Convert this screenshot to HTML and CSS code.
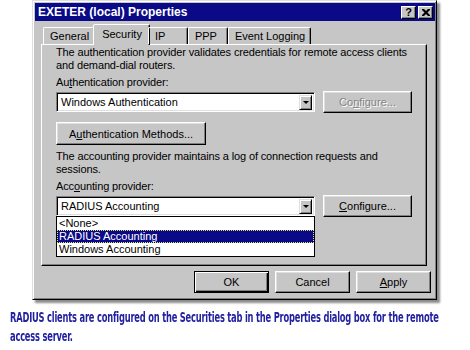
FILE: index.html
```html
<!DOCTYPE html>
<html lang="en">
<head>
    <meta charset="UTF-8">
    <title>EXETER (local) Properties</title>
    <link rel="stylesheet" href="styles.css">
</head>
<body>
    <div class="dialog">
        <div class="titlebar">
            <span class="title">EXETER (local) Properties</span>
            <div class="title-buttons">
                <span class="tbtn help">?</span>
                <span class="tbtn">
                    <svg width="8" height="7" viewBox="0 0 8 7"><path d="M0 0h2l2 2 2-2h2v1l-2.5 2.5L8 6v1H6L4 5 2 7H0V6l2.5-2.5L0 1z" fill="#000"/></svg>
                </span>
            </div>
        </div>

        <div class="tabs">
            <span class="tab">General</span>
            <span class="tab active">Security</span>
            <span class="tab">IP</span>
            <span class="tab">PPP</span>
            <span class="tab">Event Logging</span>
        </div>

        <div class="panel">
            <p class="text">The authentication provider validates credentials for remote access clients and demand-dial routers.</p>
            <div class="label">Au<u>t</u>hentication provider:</div>
            <div class="row">
                <div class="combo">
                    <span class="combo-value">Windows Authentication</span>
                    <span class="combo-arrow"><i></i></span>
                </div>
                <button class="btn config" disabled>Co<u>n</u>figure...</button>
            </div>
            <button class="btn methods">A<u>u</u>thentication Methods...</button>

            <p class="text second">The accounting provider maintains a log of connection requests and sessions.</p>
            <div class="label">Acc<u>o</u>unting provider:</div>
            <div class="row acct">
                <div class="combo-wrap">
                    <div class="combo">
                        <span class="combo-value">RADIUS Accounting</span>
                        <span class="combo-arrow"><i></i></span>
                    </div>
                    <ul class="dropdown">
                        <li>&lt;None&gt;</li>
                        <li class="selected">RADIUS Accounting</li>
                        <li>Windows Accounting</li>
                    </ul>
                </div>
                <button class="btn config"><u>C</u>onfigure...</button>
            </div>
        </div>

        <div class="footer">
            <button class="btn default">OK</button>
            <button class="btn">Cancel</button>
            <button class="btn"><u>A</u>pply</button>
        </div>
    </div>

    <p class="caption">RADIUS clients are configured on the Securities tab in the Properties dialog box for the remote<br>access server.</p>
</body>
</html>
```

FILE: styles.css
```css
body {
    margin: 0;
    background: #fff;
    font-family: "Liberation Sans", Arial, sans-serif;
    font-size: 11px;
}

.dialog {
    box-sizing: border-box;
    width: 405px;
    height: 300px;
    margin-left: 32px;
    padding: 1px;
    background: #c6c6c6;
    border: 1px solid;
    border-color: #dfdfdf #000 #000 #dfdfdf;
    box-shadow: inset 1px 1px #fff, inset -1px -1px #808080, 3px 3px 2px rgba(0, 0, 0, 0.45);
}

.titlebar {
    display: flex;
    align-items: center;
    justify-content: space-between;
    height: 18px;
    margin: 1px 0 0 1px;
    padding: 0 2px 0 3px;
    background: #0a0a88;
}

.title {
    color: #fff;
    font-weight: bold;
    font-size: 12px;
}

.title-buttons {
    display: flex;
    gap: 2px;
}

.tbtn {
    box-sizing: border-box;
    display: flex;
    align-items: center;
    justify-content: center;
    width: 15px;
    height: 13px;
    background: #c6c6c6;
    border: 1px solid;
    border-color: #fff #000 #000 #fff;
    box-shadow: inset -1px -1px #808080;
    font-weight: bold;
    font-size: 11px;
    line-height: 1;
}

/* tabs */
.tabs {
    display: flex;
    align-items: flex-end;
    height: 20px;
    margin: 3px 0 0 8px;
    padding-left: 1px;
    position: relative;
    z-index: 1;
}

.tab {
    box-sizing: border-box;
    min-width: 40px;
    height: 17px;
    padding: 2px 5px 0 6px;
    border: 1px solid;
    border-bottom: none;
    border-color: #fff #000 transparent #fff;
    border-radius: 2px 2px 0 0;
    box-shadow: inset -1px 0 #808080;
    line-height: 13px;
    white-space: nowrap;
}

.tab.active {
    height: 21px;
    margin: 0 -2px -1px;
    padding: 3px 7px 0 8px;
    background: #c6c6c6;
}

/* panel */
.panel {
    box-sizing: border-box;
    width: 386px;
    height: 222px;
    margin-left: 7px;
    padding: 1px 14px 0;
    border: 1px solid;
    border-color: #fff #000 #000 #fff;
    box-shadow: inset -1px -1px #808080;
}

.text {
    margin: 0;
    width: 358px;
    line-height: 13px;
    letter-spacing: -0.13px;
}

.text.second {
    margin-top: 5px;
}

.label {
    margin-top: 4px;
    line-height: 13px;
    letter-spacing: -0.13px;
}

.row {
    display: flex;
    align-items: center;
    gap: 8px;
    margin-top: 2px;
}

.combo-wrap {
    position: relative;
}

.combo {
    box-sizing: border-box;
    display: flex;
    align-items: center;
    justify-content: space-between;
    width: 259px;
    height: 20px;
    background: #fff;
    border: 1px solid;
    border-color: #808080 #fff #fff #808080;
    box-shadow: inset 1px 1px #000, inset -1px -1px #dfdfdf;
    padding: 2px 2px 2px 4px;
}

.combo-arrow {
    box-sizing: border-box;
    display: flex;
    align-items: center;
    justify-content: center;
    width: 13px;
    height: 15px;
    background: #c6c6c6;
    border: 1px solid;
    border-color: #dfdfdf #000 #000 #dfdfdf;
    box-shadow: inset 1px 1px #fff, inset -1px -1px #808080;
}

.combo-arrow i {
    width: 0;
    height: 0;
    border-left: 3px solid transparent;
    border-right: 3px solid transparent;
    border-top: 3px solid #000;
}

.dropdown {
    position: absolute;
    top: 20px;
    left: 0;
    box-sizing: border-box;
    width: 259px;
    margin: 0;
    padding: 0;
    list-style: none;
    background: #fff;
    border: 1px solid #000;
}

.dropdown li {
    box-sizing: border-box;
    height: 13px;
    padding-left: 2px;
    line-height: 12px;
}

.dropdown li.selected {
    background: #0a0a88;
    color: #fff;
    border: 1px dotted #e8e860;
    padding-left: 1px;
    line-height: 10px;
}

/* buttons */
.btn {
    box-sizing: border-box;
    height: 22px;
    padding: 0;
    background: #c6c6c6;
    color: #000;
    font-family: "Liberation Sans", Arial, sans-serif;
    font-size: 11px;
    border: 1px solid;
    border-color: #fff #000 #000 #fff;
    box-shadow: inset -1px -1px #808080, inset 1px 1px #dfdfdf;
}

.btn.config {
    width: 89px;
}

.btn:disabled {
    color: #858585;
    text-shadow: 1px 1px #fff;
}

.btn.methods {
    width: 150px;
    height: 23px;
    margin-top: 9px;
}

.row.acct {
    margin-top: 2px;
}

.footer {
    display: flex;
    justify-content: flex-end;
    gap: 6px;
    margin-top: 5px;
    padding-right: 4px;
}

.footer .btn {
    width: 75px;
}

.btn.default {
    border: 1px solid #000;
    box-shadow: inset 1px 1px #fff, inset -1px -1px #000, inset -2px -2px #808080;
}

.caption {
    margin: 8px 0 0 10px;
    color: #2222a0;
    font-family: "DejaVu Sans Condensed", "DejaVu Sans", sans-serif;
    font-weight: bold;
    font-size: 14px;
    line-height: 19px;
    letter-spacing: -0.3px;
    white-space: nowrap;
    transform: scaleX(0.66);
    transform-origin: 0 0;
}
```
